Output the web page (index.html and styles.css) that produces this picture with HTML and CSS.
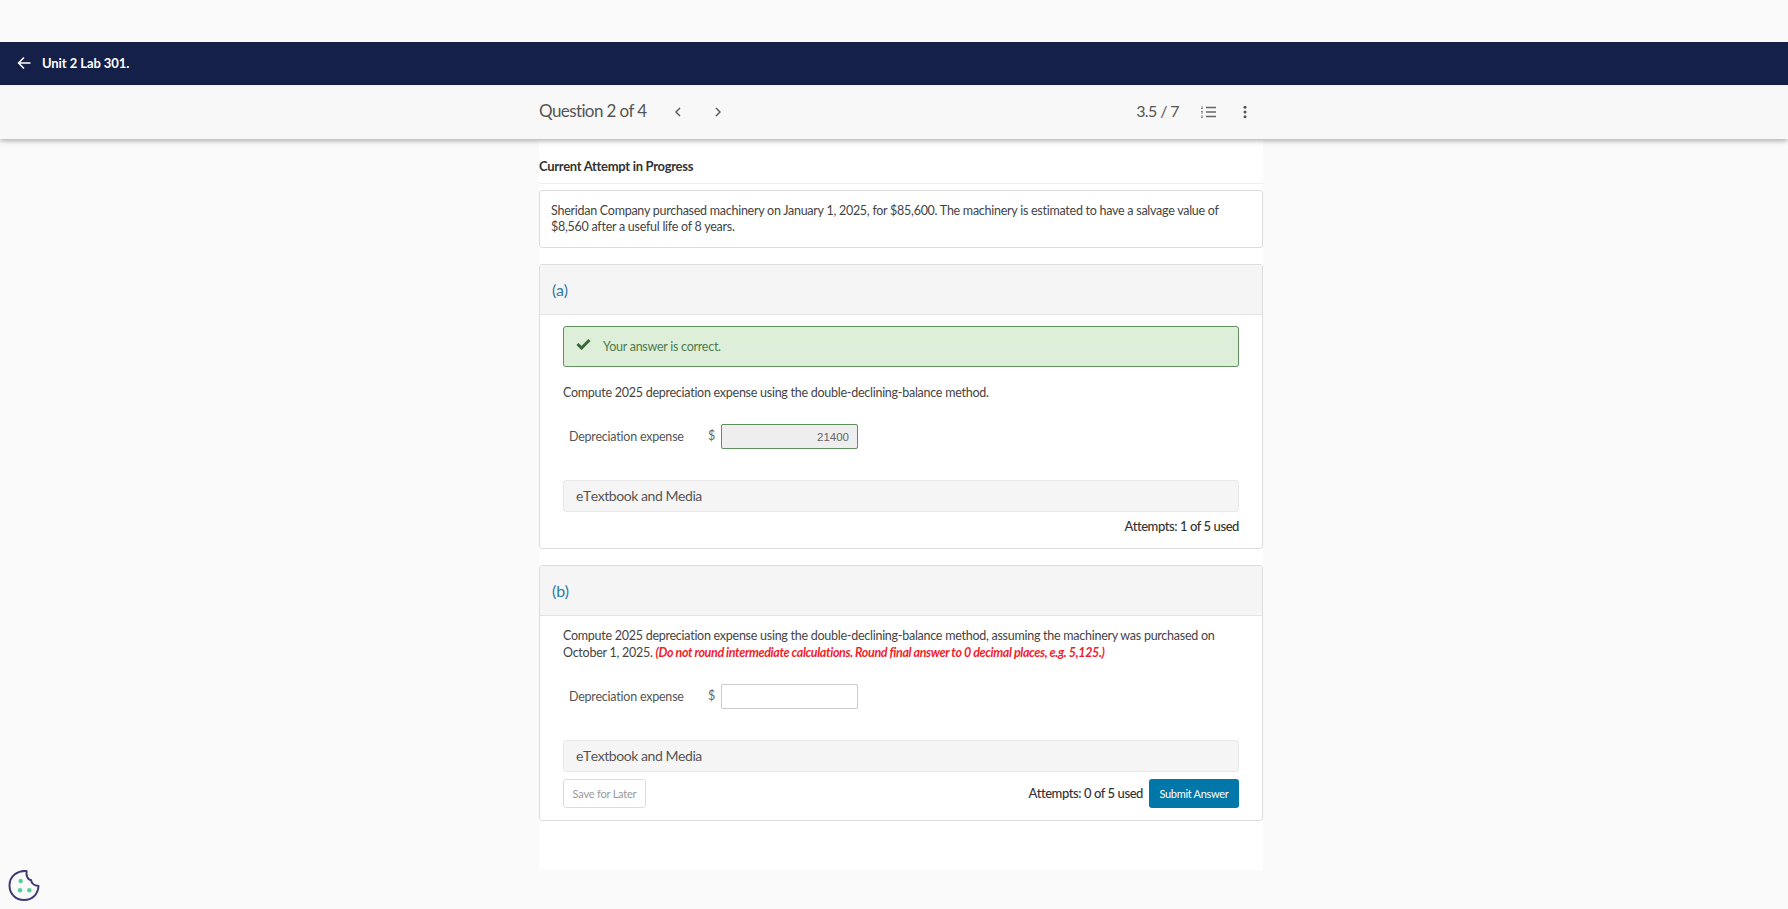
FILE: index.html
```html
<!DOCTYPE html>
<html lang="en">
<head>
<meta charset="utf-8">
<title>Unit 2 Lab 301.</title>
<link rel="stylesheet" href="styles.css">
</head>
<body>
<div class="top-gap"></div>
<header class="navbar">
  <svg class="back" viewBox="0 0 14 14" width="14" height="14"><path d="M13.500 7H1.500M7 1.500 1.500 7 7 12.500" fill="none" stroke="#fff" stroke-width="1.500"/></svg>
  <span class="nav-title">Unit 2 Lab 301.</span>
</header>
<div class="subbar">
  <div class="subbar-inner">
    <span class="q-label">Question 2 of 4</span>
    <svg class="chev first" viewBox="0 0 8 12" width="8" height="12"><path d="M6 2 2 6l4 4" fill="none" stroke="#555" stroke-width="1.400"/></svg>
    <svg class="chev" viewBox="0 0 8 12" width="8" height="12"><path d="M2 2l4 4-4 4" fill="none" stroke="#555" stroke-width="1.400"/></svg>
    <span class="score">3.5 / 7</span>
    <svg class="list-ico" viewBox="0 0 15 12" width="15" height="12"><path d="M5 1.500h10M5 6h10M5 10.500h10" stroke="#666" stroke-width="1.300"/><path d="M0 1h2M0 2.500h2M0 5.500h2M0 7h2M0 10h2M0 11.500h2" stroke="#777" stroke-width=".9"/></svg>
    <svg class="dots" viewBox="0 0 4 14" width="4" height="14"><circle cx="2" cy="2.200" r="1.500" fill="#555"/><circle cx="2" cy="7" r="1.500" fill="#555"/><circle cx="2" cy="11.800" r="1.500" fill="#555"/></svg>
  </div>
</div>
<main class="column">
  <h2 class="attempt-title">Current Attempt in Progress</h2>
  <div class="stem">Sheridan Company purchased machinery on January 1, 2025, for $85,600. The machinery is estimated to have a salvage value of $8,560 after a useful life of 8 years.</div>

  <section class="part part-a">
    <div class="part-head">(a)</div>
    <div class="part-body">
      <div class="alert">
        <svg class="check" viewBox="0 0 15 12" width="15" height="12"><path d="M1.500 6 5.500 10 13.500 2" fill="none" stroke="#37683a" stroke-width="3"/></svg>
        <span>Your answer is correct.</span>
      </div>
      <p class="prompt prompt-a">Compute 2025 depreciation expense using the double-declining-balance method.</p>
      <div class="answer-row">
        <span class="answer-label">Depreciation expense</span>
        <span class="dollar">$</span>
        <div class="field field-correct">21400</div>
      </div>
      <div class="media">eTextbook and Media</div>
      <div class="attempts attempts-a">Attempts: 1 of 5 used</div>
    </div>
  </section>

  <section class="part part-b">
    <div class="part-head">(b)</div>
    <div class="part-body">
      <p class="prompt prompt-b">Compute 2025 depreciation expense using the double-declining-balance method, assuming the machinery was purchased on October 1, 2025. <em class="hint">(Do not round intermediate calculations. Round final answer to 0 decimal places, e.g. 5,125.)</em></p>
      <div class="answer-row">
        <span class="answer-label">Depreciation expense</span>
        <span class="dollar">$</span>
        <div class="field"></div>
      </div>
      <div class="media">eTextbook and Media</div>
      <div class="actions">
        <button class="btn-save" type="button">Save for Later</button>
        <span class="attempts">Attempts: 0 of 5 used</span>
        <button class="btn-submit" type="button">Submit Answer</button>
      </div>
    </div>
  </section>
</main>
<button class="cookie" type="button" aria-label="Cookie settings">
  <svg viewBox="0 0 32 32" width="32" height="32"><path d="M18.500 2C10 1 1.500 7 1.500 16.500 1.500 25 8 31 16 31 24 31 30 25.500 30.500 17 26 17 23.500 14 23 11 20 11 18 7 18.500 2Z" fill="none" stroke="#3c3c74" stroke-width="2" stroke-linejoin="round"/><circle cx="12.700" cy="12" r="2.200" fill="#4fd19c"/><circle cx="12" cy="21.300" r="2.200" fill="#4fd19c"/><circle cx="21.300" cy="21.300" r="2.200" fill="#4fd19c"/></svg>
</button>
</body>
</html>
```
FILE: styles.css
```css
* { box-sizing: border-box; }
html, body { margin: 0; height: 909px; overflow: hidden; }
body { background: #fafafa; font-family: "Lato", "Liberation Sans", sans-serif; color: #444; font-size: 12.500px; letter-spacing: -.26px; position: relative; }
.top-gap { height: 42px; }
.navbar { height: 43px; background: #142048; display: flex; align-items: center; padding: 0 0 2px 17px; color: #fff; }
.nav-title { margin-left: 11px; font-size: 13px; font-weight: 700; letter-spacing: -.08px; }
.subbar { height: 54px; background: #f8f8f8; box-shadow: 0 2px 5px rgba(0,0,0,.3); position: relative; z-index: 1; }
.subbar-inner { width: 724px; margin-left: 539px; height: 100%; display: flex; align-items: center; padding-bottom: 3px; color: #555; font-size: 17px; letter-spacing: -.6px; }
.chev, .list-ico, .dots { margin-top: 3px; }
.chev.first { margin-left: 28px; }
.chev + .chev { margin-left: 32px; }
.score { margin-left: auto; font-size: 16px; letter-spacing: -.6px; }
.list-ico { margin-left: 22px; }
.dots { margin-left: 27px; margin-right: 16px; }
.column { width: 724px; margin-left: 539px; height: 731px; background: #fff; padding-top: 18px; }
.attempt-title { margin: 0; font-size: 13px; font-weight: 700; color: #333; letter-spacing: -.3px; line-height: 18px; padding-bottom: 8px; border-bottom: 1px solid #eee; }
.stem { margin-top: 6px; height: 58px; border: 1px solid #ddd; border-radius: 3px; padding: 12px 11px; line-height: 16px; color: #444; }
.part { border: 1px solid #ddd; border-radius: 3px; margin-top: 16px; }
.part-a { height: 285px; }
.part-b { height: 256px; }
.part-head { height: 50px; background: #f5f5f5; border-bottom: 1px solid #e4e4e4; display: flex; align-items: center; padding: 0 0 1px 12px; font-size: 16px; letter-spacing: 0; color: #2c7ba8; }
.part-body { padding: 11px 23px 0 23px; }
.alert { height: 41px; background: #deefd9; border: 1px solid #5f8f5f; border-radius: 3px; display: flex; align-items: center; padding: 0 0 0 12px; color: #4e7a4e; }
.alert span { margin-left: 12px; }
.check { margin-top: -5px; }
.prompt { margin: 0; line-height: 17px; color: #444; }
.prompt-a { margin-top: 17px; }
.hint { color: #f01e2c; font-weight: 700; font-style: italic; letter-spacing: -.37px; }
.answer-row { display: flex; align-items: center; padding-left: 6px; margin-top: 23px; height: 25px; }
.answer-label { width: 139px; color: #555; letter-spacing: -.22px; }
.dollar { width: 13px; color: #666; margin-top: -2px; }
.field { width: 137px; height: 25px; border: 1px solid #ccc; border-radius: 2px; background: #fff; box-shadow: 0 0 1px rgba(0,0,0,.1); }
.field-correct { background: #eee; border-color: #5f8f5f; text-align: right; padding: 6px 8px 0 0; font-size: 11.500px; letter-spacing: 0; font-family: "Liberation Sans", sans-serif; color: #666; }
.media { height: 32px; margin-top: 31px; background: #f5f5f5; border: 1px solid #e8e8e8; border-radius: 3px; display: flex; align-items: center; padding: 0 0 1px 12px; font-size: 14px; color: #555; letter-spacing: -.44px; font-kerning: none; }
.attempts { color: #333; font-size: 13px; font-weight: 500; letter-spacing: -.42px; }
.attempts-a { text-align: right; margin-top: 6px; }
.actions { display: flex; align-items: center; margin-top: 7px; }
.btn-save { width: 83px; height: 29px; background: #fff; border: 1px solid #ddd; border-radius: 3px; font: 400 11px "Lato", sans-serif; letter-spacing: -.2px; color: #999; padding: 0; }
.actions .attempts { margin-left: auto; margin-right: 6px; margin-top: -1px; }
.btn-submit { width: 90px; height: 29px; background: #0077a8; border: 0; border-radius: 3px; color: #fff; font: 400 11px "Lato", sans-serif; letter-spacing: -.3px; padding: 0; }
.cookie { position: absolute; left: 8px; bottom: 8px; padding: 0; border: 0; background: none; display: block; height: 32px; }
```
